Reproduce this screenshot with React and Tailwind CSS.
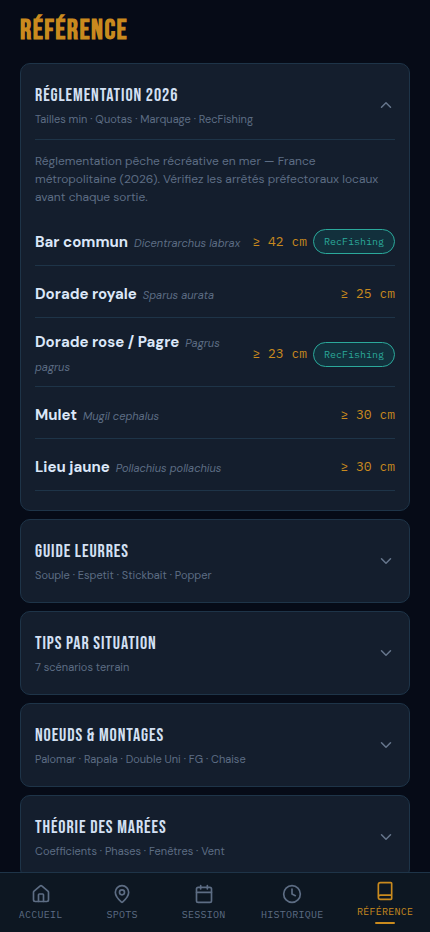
import React, { useState } from "react";
import {
  House,
  MapPin,
  Calendar,
  Clock,
  Book,
  ChevronDown,
  ChevronUp,
} from "lucide-react";

const SPECIES = [
  { name: "Bar commun", latin: "Dicentrarchus labrax", size: 42, recFishing: true },
  { name: "Dorade royale", latin: "Sparus aurata", size: 25 },
  { name: "Dorade rose / Pagre", latin: "Pagrus pagrus", size: 23, recFishing: true },
  { name: "Mulet", latin: "Mugil cephalus", size: 30 },
  { name: "Lieu jaune", latin: "Pollachius pollachius", size: 30 },
];

const SECTIONS = [
  {
    id: "reglementation",
    title: "RÉGLEMENTATION 2026",
    subtitle: "Tailles min · Quotas · Marquage · RecFishing",
  },
  {
    id: "leurres",
    title: "GUIDE LEURRES",
    subtitle: "Souple · Espetit · Stickbait · Popper",
  },
  {
    id: "tips",
    title: "TIPS PAR SITUATION",
    subtitle: "7 scénarios terrain",
  },
  {
    id: "noeuds",
    title: "NOEUDS & MONTAGES",
    subtitle: "Palomar · Rapala · Double Uni · FG · Chaise",
  },
  {
    id: "marees",
    title: "THÉORIE DES MARÉES",
    subtitle: "Coefficients · Phases · Fenêtres · Vent",
  },
];

const NAV_ITEMS = [
  { label: "ACCUEIL", href: "#accueil", icon: House },
  { label: "SPOTS", href: "#spots", icon: MapPin },
  { label: "SESSION", href: "#session", icon: Calendar },
  { label: "HISTORIQUE", href: "#historique", icon: Clock },
  { label: "RÉFÉRENCE", href: "#reference", icon: Book, active: true },
];

const Regulation = () => (
  <div className="border-t border-[#1e3448] py-3">
    <p className="text-xs leading-[18px] text-[#5d6d84]">
      Réglementation pêche récréative en mer — France métropolitaine (2026).
      Vérifiez les arrêtés préfectoraux locaux avant chaque sortie.
    </p>
    <ul className="mt-3 flex flex-col gap-1">
      {SPECIES.map((fish) => (
        <li
          key={fish.name}
          className="flex min-h-12 items-center justify-between gap-2 border-b border-[#1e3448] py-2"
        >
          <div className="text-[15px] leading-6">
            <span className="font-bold text-[#dbe7f8]">{fish.name}</span>
            <em className="ml-[6px] text-[11px] leading-5 text-[#5d6d84]">{fish.latin}</em>
          </div>
          <div className="flex shrink-0 items-center gap-[6px] font-['IBM_Plex_Mono','Liberation_Mono',monospace]">
            <span className="text-[13px] text-[#c98a1e]">≥ {fish.size} cm</span>
            {fish.recFishing && (
              <span className="rounded-full border border-[#2ba99b] bg-[#12303c] px-[10px] py-1 text-[10px] leading-[15px] text-[#2ba99b]">
                RecFishing
              </span>
            )}
          </div>
        </li>
      ))}
    </ul>
  </div>
);

const Section = ({ section, open, onToggle, children }) => {
  const Chevron = open ? ChevronUp : ChevronDown;

  return (
    <section className="rounded-[10px] border border-[#1e3448] bg-[#141e2d] px-[14px] pt-2 pb-[7px]">
      <button
        type="button"
        aria-expanded={open}
        onClick={onToggle}
        className="flex w-full items-center justify-between pt-[10px] pb-[11px] text-left"
      >
        <span className="flex flex-col gap-px">
          <span className="font-['Bebas_Neue','Liberation_Sans_Narrow',sans-serif] text-lg leading-[27px] tracking-wider text-[#d3e0f3]">
            {section.title}
          </span>
          <span className="text-[11px] leading-[18px] text-[#5d6d84]">{section.subtitle}</span>
        </span>
        <Chevron size={18} className="text-[#66768c]" />
      </button>
      {open && children}
    </section>
  );
};

const BottomNav = () => (
  <nav className="fixed inset-x-0 bottom-0 flex h-[60px] items-center justify-around border-t border-[#1e3448] bg-[#0d1722]">
    {NAV_ITEMS.map(({ label, href, icon: Icon, active }) => (
      <a
        key={label}
        href={href}
        aria-current={active ? "page" : undefined}
        className={`flex min-w-12 flex-col items-center gap-1 font-['IBM_Plex_Mono','Liberation_Mono',monospace] text-[10px] leading-[13px] tracking-wide ${
          active ? "text-[#c98a1e]" : "text-[#5d6d84]"
        }`}
      >
        <Icon size={20} />
        <span>{label}</span>
        {active && <span className="h-[2px] w-5 rounded-full bg-[#c98a1e]" />}
      </a>
    ))}
  </nav>
);

const App = () => {
  const [openId, setOpenId] = useState("reglementation");

  return (
    <div className="min-h-screen bg-[#060b17] font-['DM_Sans',Inter,sans-serif]">
      <main className="px-5 pt-[13px] pb-20">
        <h1 className="font-['Bebas_Neue','Liberation_Sans_Narrow',sans-serif] text-[28px] leading-9 font-bold tracking-wider text-[#c98a1e]">
          RÉFÉRENCE
        </h1>
        <div className="mt-[14px] flex flex-col gap-2">
          {SECTIONS.map((section) => (
            <Section
              key={section.id}
              section={section}
              open={openId === section.id}
              onToggle={() => setOpenId(openId === section.id ? null : section.id)}
            >
              {section.id === "reglementation" && <Regulation />}
            </Section>
          ))}
        </div>
      </main>
      <BottomNav />
    </div>
  );
};

export default App;
